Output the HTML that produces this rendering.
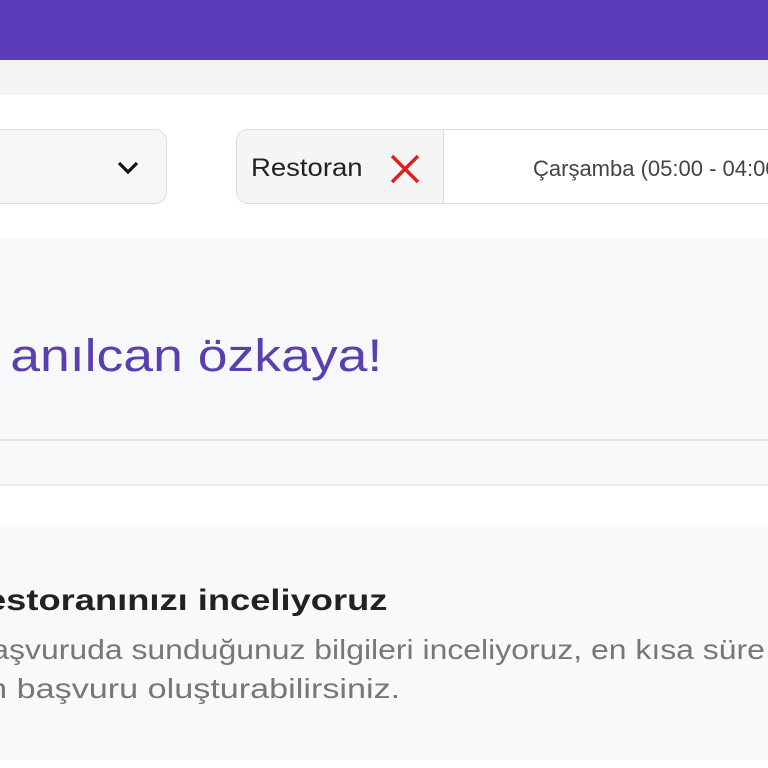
<!DOCTYPE html>
<html><head><meta charset="utf-8"><style>
*{margin:0;padding:0;box-sizing:border-box}
body{width:768px;height:768px;overflow:hidden;position:relative;background:#fff;font-family:"Liberation Sans","DejaVu Sans",sans-serif}
.a{position:absolute}
.r{position:absolute;white-space:nowrap;text-align:right}
</style></head><body>
<div class="a" style="left:0;top:0;width:768px;height:60px;background:#5b3dbb"></div>
<div class="a" style="left:0;top:60px;width:768px;height:35px;background:#f4f4f4"></div>
<div class="a" style="left:0;top:95px;width:768px;height:143px;background:#fff"></div>
<div class="a" style="left:-20px;top:129px;width:187px;height:75px;background:#f6f6f6;border:1px solid #ddd;border-radius:12px"></div>
<svg class="a" style="left:116px;top:160px" width="24" height="16" viewBox="0 0 24 16"><path d="M3 3 L12 12 L21 3" fill="none" stroke="#111" stroke-width="3.2"/></svg>
<div class="a" style="left:236px;top:129px;width:560px;height:75px;background:#fff;border:1px solid #ddd;border-radius:12px;overflow:hidden">
 <div class="a" style="left:0;top:0;width:207px;height:75px;background:#f5f5f5;border-right:1px solid #ddd"></div>
</div>
<div class="a" style="left:251px;top:154px;font-size:25px;color:#222;transform:scaleX(1.1);transform-origin:left">Restoran</div>
<svg class="a" style="left:389px;top:153px" width="32" height="32" viewBox="0 0 32 32"><path d="M3 3 L29 29 M29 3 L3 29" stroke="#e02020" stroke-width="3.4"/></svg>
<div class="a" style="left:533px;top:156px;font-size:22px;color:#444;white-space:nowrap">Çarşamba (05:00 - 04:00)</div>
<div class="a" style="left:0;top:238px;width:768px;height:202px;background:#f7f8fa"></div>
<div class="r" style="right:386px;top:330px;font-size:45px;color:#5a3fb0;transform:scaleX(1.19);transform-origin:right">Merhaba, anılcan özkaya!</div>
<div class="a" style="left:0;top:439px;width:768px;height:2px;background:#e3e3e3"></div>
<div class="a" style="left:0;top:441px;width:768px;height:43px;background:#f8f8f8"></div>
<div class="a" style="left:0;top:484px;width:768px;height:2px;background:#ececec"></div>
<div class="a" style="left:0;top:525px;width:768px;height:235px;background:#f8f9fb;overflow:hidden">
<div class="r" style="right:381px;top:59px;font-size:30px;font-weight:bold;color:#222;transform:scaleX(1.21);transform-origin:right">Restoranınızı inceliyoruz</div>
<div class="a" style="left:-30px;top:109px;font-size:28px;color:#777;white-space:nowrap;transform:scaleX(1.14);transform-origin:left">Başvuruda sunduğunuz bilgileri inceliyoruz, en kısa süre</div>
<div class="r" style="right:368px;top:148px;font-size:28px;color:#777;transform:scaleX(1.22);transform-origin:right">için başvuru oluşturabilirsiniz.</div>
</div>
</body></html>
